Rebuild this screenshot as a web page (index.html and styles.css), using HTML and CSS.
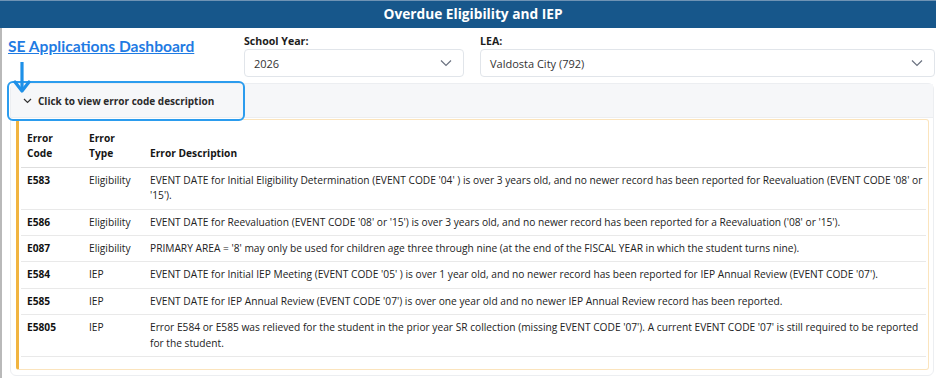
FILE: index.html
```html
<!DOCTYPE html>
<html lang="en">

<head>
    <meta charset="UTF-8">
    <meta name="viewport" content="width=device-width, initial-scale=1.0">
    <title>Overdue Eligibility and IEP</title>
    <link rel="stylesheet" href="styles.css">
</head>

<body>
    <header class="title-bar">Overdue Eligibility and IEP</header>

    <main class="page">
        <div class="filters">
            <div class="home-link-wrap">
                <a href="#" class="home-link">SE Applications Dashboard</a>
            </div>
            <div class="field field-year">
                <label class="field-label">School Year:</label>
                <div class="select">
                    <span>2026</span>
                    <svg class="select-chevron" width="12" height="8" viewBox="0 0 12 8"><path d="M1 1.5l5 5 5-5" fill="none" stroke="#6b7280" stroke-width="1.2"/></svg>
                </div>
            </div>
            <div class="field field-lea">
                <label class="field-label">LEA:</label>
                <div class="select">
                    <span>Valdosta City (792)</span>
                    <svg class="select-chevron" width="12" height="8" viewBox="0 0 12 8"><path d="M1 1.5l5 5 5-5" fill="none" stroke="#6b7280" stroke-width="1.2"/></svg>
                </div>
            </div>
        </div>

        <section class="accordion">
            <div class="accordion-head">
                <svg width="9" height="6" viewBox="0 0 9 6"><path d="M1 1l3.5 3.5L8 1" fill="none" stroke="#333" stroke-width="1.2"/></svg>
                <span>Click to view error code description</span>
            </div>

            <div class="accordion-body">
                <div class="error-card">
                    <table class="error-table">
                        <thead>
                            <tr>
                                <th class="col-code">Error<br>Code</th>
                                <th class="col-type">Error<br>Type</th>
                                <th>Error Description</th>
                            </tr>
                        </thead>
                        <tbody>
                            <tr>
                                <td class="code">E583</td>
                                <td>Eligibility</td>
                                <td class="desc">EVENT DATE for Initial Eligibility Determination (EVENT CODE '04' ) is over 3 years old, and no newer record has been reported for Reevaluation (EVENT CODE '08' or '15').</td>
                            </tr>
                            <tr>
                                <td class="code">E586</td>
                                <td>Eligibility</td>
                                <td class="desc">EVENT DATE for Reevaluation (EVENT CODE '08' or '15') is over 3 years old, and no newer record has been reported for a Reevaluation ('08' or '15').</td>
                            </tr>
                            <tr>
                                <td class="code">E087</td>
                                <td>Eligibility</td>
                                <td class="desc">PRIMARY AREA = '8' may only be used for children age three through nine (at the end of the FISCAL YEAR in which the student turns nine).</td>
                            </tr>
                            <tr>
                                <td class="code">E584</td>
                                <td>IEP</td>
                                <td class="desc">EVENT DATE for Initial IEP Meeting (EVENT CODE '05' ) is over 1 year old, and no newer record has been reported for IEP Annual Review (EVENT CODE '07').</td>
                            </tr>
                            <tr>
                                <td class="code">E585</td>
                                <td>IEP</td>
                                <td class="desc">EVENT DATE for IEP Annual Review (EVENT CODE '07') is over one year old and no newer IEP Annual Review record has been reported.</td>
                            </tr>
                            <tr>
                                <td class="code">E5805</td>
                                <td>IEP</td>
                                <td class="desc">Error E584 or E585 was relieved for the student in the prior year SR collection (missing EVENT CODE '07'). A current EVENT CODE '07' is still required to be reported for the student.</td>
                            </tr>
                        </tbody>
                    </table>
                </div>
            </div>

            <!-- annotation drawn over the accordion header -->
            <div class="callout-box"></div>
            <svg class="callout-arrow" width="18" height="32" viewBox="0 0 18 32">
                <path d="M9 0v27" stroke="#1e90e8" stroke-width="3.2"/>
                <path d="M2 20l7 9 7-9" fill="none" stroke="#1e90e8" stroke-width="3.2" stroke-linecap="round" stroke-linejoin="round"/>
            </svg>
        </section>
    </main>
</body>

</html>
```

FILE: styles.css
```css
* {
    margin: 0;
    padding: 0;
    box-sizing: border-box;
    font-family: 'Open Sans', sans-serif;
}

body {
    background: #fff;
    width: 936px;
    height: 378px;
    overflow: hidden;
    color: #222;
}

.title-bar {
    height: 28px;
    background: #17578b;
    border-top: 1px solid #6f93b4;
    color: #fff;
    font-size: 13.7px;
    font-weight: 700;
    text-align: center;
    line-height: 26px;
    padding-left: 10px;
}

.page {
    border-left: 2px solid #b9b9b9;
    padding-left: 6px;
    height: 350px;
}

.filters {
    display: flex;
    padding-top: 5px;
}

.home-link-wrap {
    width: 236px;
    padding-top: 2px;
}

.home-link {
    font-family: 'Lato', sans-serif;
    font-size: 15.6px;
    font-weight: 700;
    color: #1f7be3;
    text-decoration: underline;
}

.field {
    display: flex;
    flex-direction: column;
}

.field-year {
    width: 220px;
    margin-right: 16px;
}

.field-lea {
    width: 455px;
}

.field-label {
    font-size: 10.6px;
    font-weight: 700;
    color: #1d1d1d;
    height: 16px;
    line-height: 16px;
}

.select {
    display: flex;
    justify-content: space-between;
    align-items: center;
    height: 28px;
    padding: 0 9px 0 9px;
    border: 1px solid #e1e5ea;
    border-radius: 4px;
    font-family: 'Liberation Sans', sans-serif;
    font-size: 11px;
    color: #333;
}

.select-chevron {
    margin-right: 2px;
}

.accordion {
    position: relative;
    width: 924px;
    margin: 6px 0 0 2px;
    border: 1px solid #eceef1;
    border-radius: 6px;
}

.accordion-head {
    display: flex;
    align-items: center;
    gap: 6px;
    height: 34px;
    padding-left: 12px;
    background: #f6f7f9;
    border-bottom: 1px solid #eceef1;
    font-size: 10px;
    font-weight: 700;
    color: #2a2a2a;
}

.accordion-body {
    padding: 1px 4px 5px 5px;
}

.error-card {
    background: #fff;
    border: 1px solid #fbe4bd;
    border-left: 3px solid #f1b440;
    border-radius: 3px;
    padding: 6px 2px 12px 2px;
}

.error-table {
    width: 100%;
    border-collapse: collapse;
    font-size: 10.2px;
    line-height: 15.4px;
    color: #222;
}

.error-table th {
    text-align: left;
    font-weight: 700;
    color: #151515;
    vertical-align: bottom;
    padding: 5px 6px;
    border-bottom: 1px solid #dedede;
}

.error-table td {
    vertical-align: top;
    padding: 5px 6px;
    border-bottom: 1px solid #e9e9e9;
}

.error-table .desc {
    padding-right: 1px;
}

.col-code {
    width: 62px;
}

.col-type {
    width: 61px;
}

.code {
    font-weight: 700;
    color: #111;
}

.callout-box {
    position: absolute;
    left: -4px;
    top: -3px;
    width: 238px;
    height: 40px;
    border: 2px solid #2b9cee;
    border-radius: 6px;
}

.callout-arrow {
    position: absolute;
    left: 2px;
    top: -22px;
}
```
